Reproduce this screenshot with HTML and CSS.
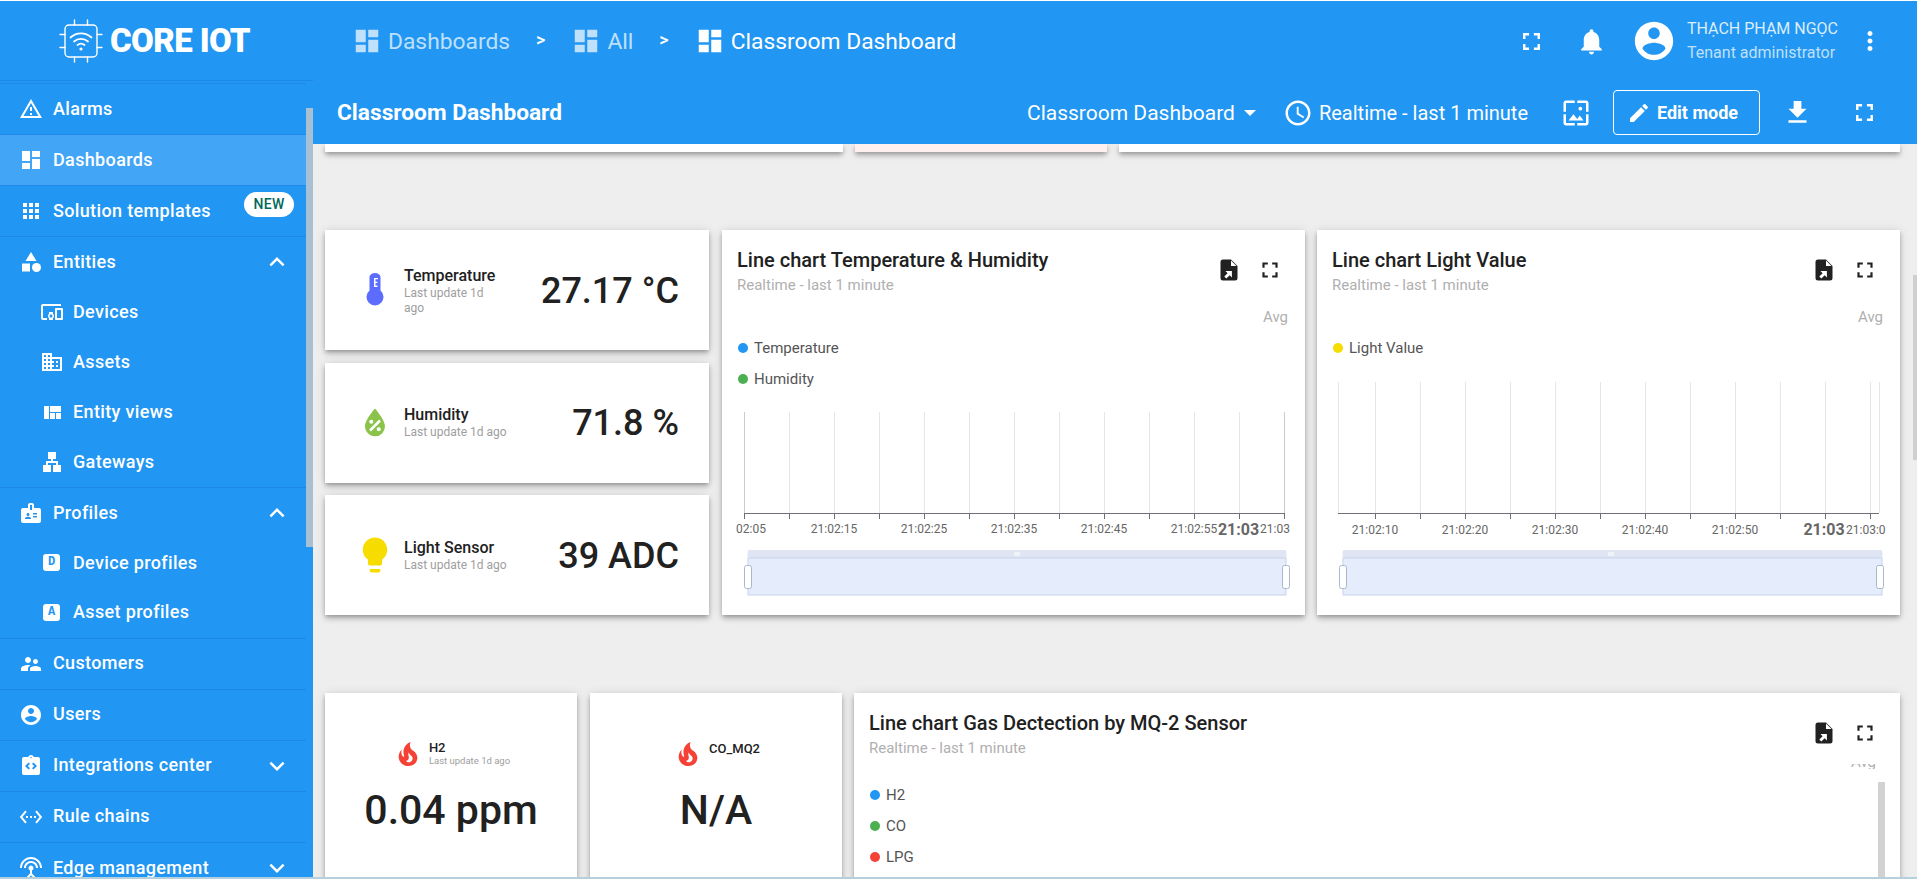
FILE: index.html
```html
<!DOCTYPE html>
<html>
<head>
<title>Classroom Dashboard</title>
<meta http-equiv="Content-Type" content="text/html;charset=utf-8" />
<link rel="stylesheet" href="styles.css">
</head>
<body>

<svg class="sprite" xmlns="http://www.w3.org/2000/svg">
  <symbol id="i-alarm" viewBox="0 0 24 24"><path d="M12 5.99L19.53 19H4.47L12 5.99M12 2L1 21h22L12 2zm1 14h-2v2h2v-2zm0-6h-2v4h2v-4z"/></symbol>
  <symbol id="i-dash" viewBox="0 0 24 24"><path d="M3 13h8V3H3v10zm0 8h8v-6H3v6zm10 0h8V11h-8v10zm0-18v6h8V3h-8z"/></symbol>
  <symbol id="i-apps" viewBox="0 0 24 24"><path d="M4 8h4V4H4v4zm6 12h4v-4h-4v4zm-6 0h4v-4H4v4zm0-6h4v-4H4v4zm6 0h4v-4h-4v4zm6-10v4h4V4h-4zm-6 4h4V4h-4v4zm6 6h4v-4h-4v4zm0 6h4v-4h-4v4z"/></symbol>
  <symbol id="i-category" viewBox="0 0 24 24"><path d="M12 2l-5.5 9h11z"/><circle cx="17.5" cy="17.5" r="4.5"/><path d="M3 13.5h8v8H3z"/></symbol>
  <symbol id="i-devices" viewBox="0 0 24 24"><path d="M3 6h18V4H3c-1.1 0-2 .9-2 2v12c0 1.1.9 2 2 2h4v-2H3V6zm10 6H9v1.78c-.61.55-1 1.33-1 2.22s.39 1.67 1 2.22V20h4v-1.78c.61-.55 1-1.34 1-2.22s-.39-1.67-1-2.22V12zm-2 5.5c-.83 0-1.5-.67-1.5-1.5s.67-1.5 1.5-1.5 1.5.67 1.5 1.5-.67 1.5-1.5 1.5zM22 8h-6c-.5 0-1 .5-1 1v10c0 .5.5 1 1 1h6c.5 0 1-.5 1-1V9c0-.5-.5-1-1-1zm-1 10h-4v-8h4v8z"/></symbol>
  <symbol id="i-domain" viewBox="0 0 24 24"><path d="M12 7V3H2v18h20V7H12zM6 19H4v-2h2v2zm0-4H4v-2h2v2zm0-4H4V9h2v2zm0-4H4V5h2v2zm4 12H8v-2h2v2zm0-4H8v-2h2v2zm0-4H8V9h2v2zm0-4H8V5h2v2zm10 12h-8v-2h2v-2h-2v-2h2v-2h-2V9h8v10zm-2-8h-2v2h2v-2zm0 4h-2v2h2v-2z"/></symbol>
  <symbol id="i-quilt" viewBox="0 0 24 24"><path d="M10 18h5v-6h-5v6zm-6 0h5V5H4v13zm12 0h5v-6h-5v6zM10 5v6h11V5H10z"/></symbol>
  <symbol id="i-lan" viewBox="0 0 24 24"><path d="M13 22h8v-7h-3v-4h-5V9h3V2H8v7h3v2H6v4H3v7h8v-7H8v-2h8v2h-3z"/></symbol>
  <symbol id="i-badge" viewBox="0 0 24 24"><path d="M20 7h-5V4c0-1.1-.9-2-2-2h-2c-1.1 0-2 .9-2 2v3H4c-1.1 0-2 .9-2 2v11c0 1.1.9 2 2 2h16c1.1 0 2-.9 2-2V9c0-1.1-.9-2-2-2zM9 12c.83 0 1.5.67 1.5 1.5S9.83 15 9 15s-1.5-.67-1.5-1.5S8.17 12 9 12zm3 6H6v-.75c0-1 2-1.5 3-1.5s3 .5 3 1.5V18zm1-9h-2V4h2v5zm5 7.5h-4V15h4v1.5zm0-3h-4V12h4v1.5z"/></symbol>
  <symbol id="i-people" viewBox="0 0 24 24"><path d="M16.5 12c1.38 0 2.49-1.12 2.49-2.5S17.88 7 16.5 7C15.12 7 14 8.12 14 9.5s1.12 2.5 2.5 2.5zM9 11c1.66 0 2.99-1.34 2.99-3S10.66 5 9 5C7.34 5 6 6.34 6 8s1.34 3 3 3zm7.5 3c-1.83 0-5.5.92-5.5 2.75V19h11v-2.25c0-1.83-3.67-2.75-5.5-2.75zM9 13c-2.33 0-7 1.17-7 3.5V19h7v-2.25c0-.85.33-2.34 2.37-3.47C10.5 13.1 9.66 13 9 13z"/></symbol>
  <symbol id="i-account" viewBox="0 0 24 24"><path d="M12 2C6.48 2 2 6.48 2 12s4.48 10 10 10 10-4.48 10-10S17.52 2 12 2zm0 3c1.66 0 3 1.34 3 3s-1.34 3-3 3-3-1.34-3-3 1.34-3 3-3zm0 14.2c-2.5 0-4.71-1.28-6-3.22.03-1.99 4-3.08 6-3.08 1.99 0 5.97 1.09 6 3.08-1.29 1.94-3.5 3.22-6 3.22z"/></symbol>
  <symbol id="i-integration" viewBox="0 0 24 24"><path d="M19 3h-4.18C14.4 1.84 13.3 1 12 1c-1.3 0-2.4.84-2.82 2H5c-.14 0-.27.01-.4.04-.39.08-.74.28-1.01.55-.18.18-.33.4-.43.64-.1.23-.16.49-.16.77v14c0 .27.06.54.16.78s.25.45.43.64c.27.27.62.47 1.01.55.13.02.26.03.4.03h14c1.1 0 2-.9 2-2V5c0-1.1-.9-2-2-2zm-8 11.17l-1.41 1.42L6 12l3.59-3.59L11 9.83 8.83 12 11 14.17zm1-9.92c-.41 0-.75-.34-.75-.75s.34-.75.75-.75.75.34.75.75-.34.75-.75.75zm2.41 11.34L13 14.17 15.17 12 13 9.83l1.41-1.42L18 12l-3.59 3.59z"/></symbol>
  <symbol id="i-rules" viewBox="0 0 24 24"><path d="M7.77 6.76L6.23 5.48.82 12l5.41 6.52 1.54-1.28L3.42 12l4.35-5.24zM7 13h2v-2H7v2zm10-2h-2v2h2v-2zm-6 2h2v-2h-2v2zm6.77-7.52l-1.54 1.28L20.58 12l-4.35 5.24 1.54 1.28L23.18 12l-5.41-6.52z"/></symbol>
  <symbol id="i-antenna" viewBox="0 0 24 24"><path d="M12 5c-3.87 0-7 3.13-7 7h2c0-2.76 2.24-5 5-5s5 2.24 5 5h2c0-3.87-3.13-7-7-7zm1 9.29c.88-.39 1.5-1.26 1.5-2.29 0-1.38-1.12-2.5-2.5-2.5S9.5 10.62 9.5 12c0 1.02.62 1.9 1.5 2.29v3.3L7.59 21 9 22.41l3-3 3 3L16.41 21 13 17.59v-3.3zM12 1C5.93 1 1 5.93 1 12h2c0-4.97 4.03-9 9-9s9 4.03 9 9h2c0-6.07-4.93-11-11-11z"/></symbol>
  <symbol id="i-less" viewBox="0 0 24 24"><path d="M12 8l-6 6 1.41 1.41L12 10.83l4.59 4.58L18 14z"/></symbol>
  <symbol id="i-more" viewBox="0 0 24 24"><path d="M16.59 8.59L12 13.17 7.41 8.59 6 10l6 6 6-6z"/></symbol>
  <symbol id="i-full" viewBox="0 0 24 24"><path d="M7 14H5v5h5v-2H7v-3zm-2-4h2V7h3V5H5v5zm12 7h-3v2h5v-5h-2v3zM14 5v2h3v3h2V5h-5z"/></symbol>
  <symbol id="i-bell" viewBox="0 0 24 24"><path d="M12 22c1.1 0 2-.9 2-2h-4c0 1.1.89 2 2 2zm6-6v-5c0-3.07-1.64-5.64-4.5-6.32V4c0-.83-.67-1.5-1.5-1.5s-1.5.67-1.5 1.5v.68C7.63 5.36 6 7.92 6 11v5l-2 2v1h16v-1l-2-2z"/></symbol>
  <symbol id="i-vert" viewBox="0 0 24 24"><path d="M12 8c1.1 0 2-.9 2-2s-.9-2-2-2-2 .9-2 2 .9 2 2 2zm0 2c-1.1 0-2 .9-2 2s.9 2 2 2 2-.9 2-2-.9-2-2-2zm0 6c-1.1 0-2 .9-2 2s.9 2 2 2 2-.9 2-2-.9-2-2-2z"/></symbol>
  <symbol id="i-clock" viewBox="0 0 24 24"><path d="M11.99 2C6.47 2 2 6.48 2 12s4.47 10 9.99 10C17.52 22 22 17.52 22 12S17.52 2 11.99 2zM12 20c-4.42 0-8-3.58-8-8s3.58-8 8-8 8 3.58 8 8-3.58 8-8 8zm.5-13H11v6l5.25 3.15.75-1.23-4.5-2.67z"/></symbol>
  <symbol id="i-wall" viewBox="0 0 24 24"><path d="M4 4h7V2H4c-1.1 0-2 .9-2 2v7h2V4zm6 9l-4 5h12l-3-4-2.03 2.71L10 13zm7-4.5c0-.83-.67-1.5-1.5-1.5S14 7.67 14 8.5s.67 1.5 1.5 1.5S17 9.33 17 8.5zM20 2h-7v2h7v7h2V4c0-1.1-.9-2-2-2zm0 18h-7v2h7c1.1 0 2-.9 2-2v-7h-2v7zM4 13H2v7c0 1.1.9 2 2 2h7v-2H4v-7z"/></symbol>
  <symbol id="i-edit" viewBox="0 0 24 24"><path d="M3 17.25V21h3.75L17.81 9.94l-3.75-3.75L3 17.25zM20.71 7.04c.39-.39.39-1.02 0-1.41l-2.34-2.34c-.39-.39-1.02-.39-1.41 0l-1.83 1.83 3.75 3.75 1.83-1.83z"/></symbol>
  <symbol id="i-down" viewBox="0 0 24 24"><path d="M19 9h-4V3H9v6H5l7 7 7-7zM5 18v2h14v-2H5z"/></symbol>
  <symbol id="i-export" viewBox="0 0 24 24"><path fill="#212121" d="M6 1.5a2.5 2.5 0 0 0-2.5 2.5v16A2.5 2.5 0 0 0 6 22.500h12a2.500 2.500 0 0 0 2.500-2.500V8l-6.500-6.500z"/><path fill="#fff" d="M14 2.500v5.500h5.500zM9.300 20.500l-2-2 3.300-3.300-2.100-2.100h6.400v6.400l-2.200-2.200z"/></symbol>
  <symbol id="i-water" viewBox="0 0 24 24"><path d="M12,3.25C12,3.25 6,10 6,14C6,17.32 8.69,20 12,20A6,6 0 0,0 18,14C18,10 12,3.25 12,3.25M14.47,9.97L15.53,11.03L9.53,17.03L8.47,15.97M9.75,10A1.25,1.25 0 0,1 11,11.25A1.25,1.25 0 0,1 9.75,12.5A1.25,1.25 0 0,1 8.5,11.25A1.25,1.25 0 0,1 9.75,10M14.25,14.5A1.25,1.25 0 0,1 15.5,15.75A1.25,1.25 0 0,1 14.25,17A1.25,1.25 0 0,1 13,15.75A1.25,1.25 0 0,1 14.25,14.5Z"/></symbol>
  <symbol id="i-bulb" viewBox="0 0 24 24"><path d="M9 21c0 .55.45 1 1 1h4c.55 0 1-.45 1-1v-1H9v1zm3-19C8.140 2 5 5.140 5 9c0 2.380 1.190 4.470 3 5.740V17c0 .55.45 1 1 1h6c.55 0 1-.45 1-1v-2.260c1.810-1.270 3-3.360 3-5.740 0-3.860-3.140-7-7-7z"/></symbol>
  <symbol id="i-fire" viewBox="0 0 24 24"><path d="M17.66 11.2C17.43 10.9 17.15 10.64 16.89 10.38C16.22 9.78 15.46 9.35 14.82 8.72C13.33 7.26 13 4.85 13.95 3C13 3.23 12.17 3.75 11.46 4.32C8.87 6.4 7.85 10.07 9.07 13.22C9.11 13.32 9.15 13.42 9.15 13.55C9.15 13.77 9 13.97 8.8 14.05C8.57 14.15 8.33 14.09 8.14 13.93C8.08 13.88 8.04 13.83 8 13.76C6.87 12.33 6.69 10.28 7.45 8.64C5.78 10 4.87 12.3 5 14.47C5.06 14.97 5.12 15.47 5.29 15.97C5.43 16.57 5.7 17.17 6 17.7C7.08 19.43 8.95 20.67 10.96 20.92C13.1 21.19 15.39 20.8 17.03 19.32C18.86 17.66 19.5 15 18.56 12.72L18.43 12.46C18.22 12 17.66 11.2 17.66 11.2M14.5 17.5C14.22 17.74 13.76 18 13.4 18.1C12.28 18.5 11.16 17.94 10.5 17.28C11.69 17 12.4 16.12 12.61 15.23C12.78 14.43 12.46 13.77 12.33 13C12.21 12.26 12.23 11.63 12.5 10.94C12.69 11.32 12.89 11.7 13.13 12C13.9 13 15.11 13.44 15.37 14.8C15.41 14.94 15.43 15.08 15.43 15.23C15.46 16.05 15.1 16.95 14.5 17.5H14.5Z"/></symbol>
</svg>

<div class="app">
  <aside class="sidebar">
    <div class="logo">
      <svg class="logo-chip" viewBox="0 0 44 44" stroke="#fff" stroke-width="1.400" stroke-linecap="round">
        <rect x="6" y="6" width="32" height="32" rx="4"/>
        <path d="M15.500 1v5M28.500 1v5M15.500 38v5M28.500 38v5M1 15.500h5M1 28.500h5M38 15.500h5M38 28.500h5"/>
        <path stroke-width="1.800" d="M11.500 18.500c6-5.500 15-5.500 21 0M15 22.500c4-3.500 10-3.500 14 0M18.500 26c2-1.500 5-1.500 7 0"/>
        <circle cx="22" cy="30" r="1.600" fill="#fff" stroke="none"/>
      </svg>
      <span class="logo-text">CORE IOT</span>
    </div>
    <nav class="menu">
      <a class="item line"><svg class="ico"><use href="#i-alarm"/></svg><span>Alarms</span></a>
      <a class="item line active"><svg class="ico"><use href="#i-dash"/></svg><span>Dashboards</span></a>
      <a class="item line"><svg class="ico"><use href="#i-apps"/></svg><span>Solution templates</span><b class="new">NEW</b></a>
      <a class="item open"><svg class="ico"><use href="#i-category"/></svg><span>Entities</span><svg class="chev"><use href="#i-less"/></svg></a>
      <a class="item sub"><svg class="ico"><use href="#i-devices"/></svg><span>Devices</span></a>
      <a class="item sub"><svg class="ico"><use href="#i-domain"/></svg><span>Assets</span></a>
      <a class="item sub"><svg class="ico"><use href="#i-quilt"/></svg><span>Entity views</span></a>
      <a class="item sub line"><svg class="ico"><use href="#i-lan"/></svg><span>Gateways</span></a>
      <a class="item open"><svg class="ico"><use href="#i-badge"/></svg><span>Profiles</span><svg class="chev"><use href="#i-less"/></svg></a>
      <a class="item sub"><i class="letter">D</i><span>Device profiles</span></a>
      <a class="item sub line"><i class="letter">A</i><span>Asset profiles</span></a>
      <a class="item line"><svg class="ico"><use href="#i-people"/></svg><span>Customers</span></a>
      <a class="item line"><svg class="ico"><use href="#i-account"/></svg><span>Users</span></a>
      <a class="item line"><svg class="ico"><use href="#i-integration"/></svg><span>Integrations center</span><svg class="chev"><use href="#i-more"/></svg></a>
      <a class="item line"><svg class="ico"><use href="#i-rules"/></svg><span>Rule chains</span></a>
      <a class="item"><svg class="ico"><use href="#i-antenna"/></svg><span>Edge management</span><svg class="chev"><use href="#i-more"/></svg></a>
    </nav>
    <div class="side-thumb"></div>
  </aside>

  <main class="main">
    <header class="topbar">
      <div class="bar-top">
        <div class="crumb dim"><svg class="crumb-ico"><use href="#i-dash"/></svg>Dashboards</div>
        <span class="sep">&gt;</span>
        <div class="crumb dim"><svg class="crumb-ico"><use href="#i-dash"/></svg>All</div>
        <span class="sep">&gt;</span>
        <div class="crumb"><svg class="crumb-ico"><use href="#i-dash"/></svg>Classroom Dashboard</div>
        <button class="btn push"><svg><use href="#i-full"/></svg></button>
        <button class="btn bell"><svg><use href="#i-bell"/></svg></button>
        <svg class="avatar"><use href="#i-account"/></svg>
        <div class="user">
          <div class="user-name">THẠCH PHẠM NGỌC</div>
          <div class="user-role">Tenant administrator</div>
        </div>
        <button class="btn vert"><svg><use href="#i-vert"/></svg></button>
      </div>
      <div class="bar-bottom">
        <div class="dash-title">Classroom Dashboard</div>
        <div class="state push">Classroom Dashboard<i class="caret"></i></div>
        <svg class="clock"><use href="#i-clock"/></svg>
        <div class="time">Realtime - last 1 minute</div>
        <button class="btn wall"><svg><use href="#i-wall"/></svg></button>
        <button class="edit"><svg><use href="#i-edit"/></svg>Edit mode</button>
        <button class="btn down"><svg><use href="#i-down"/></svg></button>
        <button class="btn full2"><svg><use href="#i-full"/></svg></button>
      </div>
    </header>

    <div class="content">
      <div class="row row-cut">
        <div class="card w-cut1"></div>
        <div class="card w-cut2 pink"></div>
        <div class="card w-cut3"></div>
      </div>

      <div class="row row-mid">
        <div class="stack">
          <div class="card stat">
            <svg class="stat-ico thermo" viewBox="0 0 17 34"><path fill="#5b6cff" d="M3 4a5.500 4 0 0 1 11 0v13.500a8.500 8.500 0 1 1-11 0z"/><path fill="#fff" d="M7.500 5h4v1.300h-2.500v2.500h2v1.300h-2v2.500h2v1.300h-3.500z"/></svg>
            <div class="stat-text narrow"><div class="stat-name">Temperature</div><div class="stat-sub">Last update 1d ago</div></div>
            <div class="stat-val">27.17 °C</div>
          </div>
          <div class="card stat">
            <svg class="stat-ico water"><use href="#i-water"/></svg>
            <div class="stat-text"><div class="stat-name">Humidity</div><div class="stat-sub">Last update 1d ago</div></div>
            <div class="stat-val">71.8 %</div>
          </div>
          <div class="card stat">
            <svg class="stat-ico bulb"><use href="#i-bulb"/></svg>
            <div class="stat-text"><div class="stat-name">Light Sensor</div><div class="stat-sub">Last update 1d ago</div></div>
            <div class="stat-val">39 ADC</div>
          </div>
        </div>

        <div class="card chart">
          <div class="chart-head">
            <div><div class="chart-title">Line chart Temperature &amp; Humidity</div><div class="chart-sub">Realtime - last 1 minute</div></div>
            <svg class="act"><use href="#i-export"/></svg><svg class="act act-full"><use href="#i-full"/></svg>
          </div>
          <div class="avg">Avg</div>
          <div class="leg"><i class="dot blue"></i>Temperature</div>
          <div class="leg"><i class="dot green"></i>Humidity</div>
          <svg class="plot" width="583" height="220" viewBox="0 15 583 220">
            <path class="grid" d="M67.500 32V133M112.500 32V133M157.500 32V133M202.500 32V133M247.500 32V133M292.500 32V133M337.500 32V133M382.500 32V133M427.500 32V133M472.500 32V133M517.500 32V133"/>
            <path class="grid edge" d="M22.500 32V133M562.500 32V133"/>
            <path class="axis" d="M22 133.500H563M22.500 133V139M67.500 133V139M112.500 133V139M157.500 133V139M202.500 133V139M247.500 133V139M292.500 133V139M337.500 133V139M382.500 133V139M427.500 133V139M472.500 133V139M517.500 133V139M562.500 133V139"/>
            <text x="14" y="153">02:05</text>
            <text x="112" y="153" class="mid">21:02:15</text><text x="202" y="153" class="mid">21:02:25</text><text x="292" y="153" class="mid">21:02:35</text><text x="382" y="153" class="mid">21:02:45</text><text x="472" y="153" class="mid">21:02:55</text>
            <text x="516.500" y="155" class="mid bold">21:03</text>
            <text x="538" y="153">21:03</text>
            <rect class="s-top" x="25.500" y="170" width="539" height="8" rx="2"/>
            <rect class="s-body" x="26" y="178" width="538" height="37"/>
            <path class="s-grip" d="M293 172v4M295 172v4M297 172v4"/>
            <rect class="s-handle" x="22.500" y="185.500" width="7" height="23" rx="2"/>
            <rect class="s-handle" x="560.500" y="185.500" width="7" height="23" rx="2"/>
          </svg>
        </div>

        <div class="card chart">
          <div class="chart-head">
            <div><div class="chart-title">Line chart Light Value</div><div class="chart-sub">Realtime - last 1 minute</div></div>
            <svg class="act"><use href="#i-export"/></svg><svg class="act act-full"><use href="#i-full"/></svg>
          </div>
          <div class="avg">Avg</div>
          <div class="leg"><i class="dot yellow"></i>Light Value</div>
          <svg class="plot" width="583" height="235" viewBox="0 0 583 235">
            <path class="grid" d="M21.500 2V133M58.500 2V133M103.500 2V133M148.500 2V133M193.500 2V133M238.500 2V133M283.500 2V133M328.500 2V133M373.500 2V133M418.500 2V133M463.500 2V133M508.500 2V133M553.500 2V133M562.500 2V133"/>
            <path class="axis" d="M21 133.500H562M58.500 133V139M103.500 133V139M148.500 133V139M193.500 133V139M238.500 133V139M283.500 133V139M328.500 133V139M373.500 133V139M418.500 133V139M463.500 133V139M508.500 133V139M553.500 133V139"/>
            <text x="58" y="154" class="mid">21:02:10</text><text x="148" y="154" class="mid">21:02:20</text><text x="238" y="154" class="mid">21:02:30</text><text x="328" y="154" class="mid">21:02:40</text><text x="418" y="154" class="mid">21:02:50</text>
            <text x="507" y="155" class="mid bold">21:03</text>
            <text x="529" y="154">21:03:0</text>
            <rect class="s-top" x="25.500" y="170" width="540" height="8" rx="2"/>
            <rect class="s-body" x="26" y="178" width="539" height="37"/>
            <path class="s-grip" d="M292 172v4M294 172v4M296 172v4"/>
            <rect class="s-handle" x="22.500" y="185.500" width="7" height="23" rx="2"/>
            <rect class="s-handle" x="559.500" y="185.500" width="7" height="23" rx="2"/>
          </svg>
        </div>
      </div>

      <div class="row row-low">
        <div class="card gas w-gas">
          <div class="gas-head">
            <svg class="fire"><use href="#i-fire"/></svg>
            <div><div class="gas-name">H2</div><div class="gas-sub">Last update 1d ago</div></div>
          </div>
          <div class="gas-val">0.04 ppm</div>
        </div>
        <div class="card gas w-gas">
          <div class="gas-head">
            <svg class="fire"><use href="#i-fire"/></svg>
            <div class="gas-only"><div class="gas-name">CO_MQ2</div></div>
          </div>
          <div class="gas-val">N/A</div>
        </div>
        <div class="card chart wide">
          <div class="chart-head">
            <div><div class="chart-title">Line chart Gas Dectection by MQ-2 Sensor</div><div class="chart-sub">Realtime - last 1 minute</div></div>
            <svg class="act"><use href="#i-export"/></svg><svg class="act act-full"><use href="#i-full"/></svg>
          </div>
          <div class="avg-clip"><span>Avg</span></div>
          <div class="leg"><i class="dot blue"></i>H2</div>
          <div class="leg"><i class="dot green"></i>CO</div>
          <div class="leg"><i class="dot red"></i>LPG</div>
          <div class="leg-thumb"></div>
        </div>
      </div>
    </div>
    <div class="page-thumb"></div>
  </main>
</div>
<div class="edge-line"></div>
</body>
</html>
```

FILE: styles.css
```css
html, body {
    margin: 0;
    padding: 0;
    height: 879px;
    overflow: hidden;
    background: #fff;
    font-family: Roboto, "Liberation Sans", sans-serif;
}
.sprite {
    display: none;
}
svg {
    fill: currentColor;
}
.app {
    display: flex;
    margin-top: 1px;
    height: 876px;
    overflow: hidden;
}
.edge-line {
    height: 2px;
    background: #b4d0de;
}

/* sidebar */
.sidebar {
    position: relative;
    flex: none;
    width: 313px;
    background: #2196f3;
    color: #fff;
    overflow: hidden;
}
.logo {
    display: flex;
    align-items: center;
    height: 80px;
    padding-left: 59px;
    border-bottom: 1px solid #1e88e5;
    box-sizing: border-box;
}
.logo-chip {
    width: 44px;
    height: 44px;
    margin-right: 7px;
    fill: none;
}
.logo-text {
    font-size: 33px;
    font-weight: 900;
    letter-spacing: -0.6px;
}
.menu {
    width: 306px;
    margin-top: 2px;
    border-top: 1px solid #1e88e5;
}
.item {
    display: flex;
    align-items: center;
    height: 51px;
    box-sizing: border-box;
    padding-left: 53px;
    padding-bottom: 2px;
    font-size: 18px;
    font-weight: 500;
    letter-spacing: 0.35px;
    position: relative;
}
.item.sub {
    height: 50.200px;
    padding-left: 73px;
}
.item.open {
    height: 50.200px;
}
.line {
    border-bottom: 1px solid #1e88e5;
}
.active {
    background: #42a5f5;
}
.ico {
    position: absolute;
    left: 19px;
    top: 50%;
    width: 24px;
    height: 24px;
    margin-top: -12px;
}
.sub .ico {
    left: 40px;
}
.letter {
    position: absolute;
    left: 43px;
    top: 50%;
    width: 17px;
    height: 17px;
    margin-top: -9px;
    background: #fff;
    border-radius: 3px;
    color: #2196f3;
    font: 700 12px/17px "Liberation Mono", monospace;
    letter-spacing: 0;
    text-align: center;
}
.new {
    position: absolute;
    left: 244px;
    top: 6px;
    width: 50px;
    height: 25px;
    border-radius: 13px;
    background: #fff;
    color: #00695c;
    font-size: 14px;
    font-weight: 500;
    line-height: 25px;
    text-align: center;
}
.chev {
    position: absolute;
    left: 262px;
    top: 50%;
    width: 30px;
    height: 30px;
    margin-top: -15px;
}
.side-thumb {
    position: absolute;
    top: 107px;
    left: 306px;
    width: 7px;
    height: 439px;
    background: #a9bfd4;
}

/* top bar */
.main {
    position: relative;
    flex: 1;
    min-width: 0;
    display: flex;
    flex-direction: column;
    background: #eee;
}
.topbar {
    flex: none;
    background: #2196f3;
    color: #fff;
    position: relative;
    z-index: 2;
}
.bar-top {
    display: flex;
    align-items: center;
    height: 80px;
    padding-left: 43px;
    padding-right: 27px;
}
.bar-bottom {
    display: flex;
    align-items: center;
    height: 63px;
    padding-left: 24px;
    padding-right: 33px;
}
.crumb {
    display: flex;
    align-items: center;
    font-size: 22.800px;
}
.dim {
    color: #bfe0fb;
}
.crumb-ico {
    width: 30px;
    height: 30px;
    margin-left: -4px;
    margin-right: 6px;
}
.sep {
    font-size: 18px;
    font-weight: 500;
    margin: -4px 30px 0 26px;
}
button {
    border: 0;
    padding: 0;
    background: none;
    color: #fff;
    font-family: inherit;
}
.btn {
    flex: none;
    display: flex;
    align-items: center;
    justify-content: center;
    width: 40px;
    height: 40px;
}
.btn svg {
    flex: none;
    width: 29px;
    height: 29px;
}
.push {
    margin-left: auto;
}
.bell {
    margin-left: 20px;
}
.bell svg {
    width: 31px;
    height: 31px;
}
.avatar {
    flex: none;
    width: 46px;
    height: 46px;
    margin-left: 20px;
}
.user {
    width: 153px;
    margin-left: 10px;
    font-size: 16px;
    line-height: 24px;
    white-space: nowrap;
}
.user-name {
    color: #dcedfc;
}
.user-role {
    color: #bfe0fb;
}
.vert {
    margin-left: 10px;
}
.vert svg {
    width: 30px;
    height: 30px;
}
.dash-title {
    font-size: 22.700px;
    font-weight: 700;
}
.state {
    font-size: 21px;
    display: flex;
    align-items: center;
}
.caret {
    width: 0;
    height: 0;
    margin-left: 9px;
    border-left: 6px solid transparent;
    border-right: 6px solid transparent;
    border-top: 6px solid #fff;
}
.clock {
    flex: none;
    width: 30px;
    height: 30px;
    margin-left: 27px;
    margin-right: 6px;
}
.time {
    font-size: 20px;
    white-space: nowrap;
}
.wall {
    margin-left: 28px;
}
.wall svg {
    width: 30px;
    height: 30px;
}
.edit {
    display: flex;
    align-items: center;
    width: 147px;
    height: 45px;
    margin-left: 17px;
    padding-left: 13px;
    box-sizing: border-box;
    border: 1px solid #fff;
    border-radius: 4px;
    font-size: 18px;
    font-weight: 700;
    white-space: nowrap;
}
.edit svg {
    flex: none;
    width: 24px;
    height: 24px;
    margin-right: 6px;
}
.down {
    margin-left: 17px;
}
.down svg {
    width: 31px;
    height: 31px;
}
.full2 {
    margin-left: 27px;
}

/* dashboard */
.content {
    flex: 1;
    min-height: 0;
    padding: 0 17px 0 12px;
    overflow: hidden;
}
.row {
    display: flex;
    column-gap: 12px;
}
.card {
    background: #fff;
    box-shadow: 0 2px 4px -1px rgba(0,0,0,.25), 0 4px 5px rgba(0,0,0,.14), 0 1px 10px rgba(0,0,0,.12);
}
.row-cut {
    height: 8px;
}
.w-cut1 {
    width: 518px;
}
.w-cut2 {
    width: 252px;
}
.pink {
    background: #fff0f0;
}
.w-cut3 {
    flex: 1;
}
.row-mid {
    height: 385px;
    margin-top: 78px;
}
.row-low {
    height: 300px;
    margin-top: 78px;
}
.stack {
    flex: none;
    width: 384px;
    margin-right: 1px;
    display: flex;
    flex-direction: column;
    justify-content: space-between;
}
.stat {
    display: flex;
    align-items: center;
    height: 120px;
    padding-right: 30px;
}
.stat-ico {
    flex: none;
    width: 58px;
    height: 34px;
    margin-left: 21px;
}
.water {
    height: 40px;
    color: #8bc34a;
}
.bulb {
    height: 42px;
    color: #f7dc00;
}
.stat-text {
    width: 110px;
    white-space: nowrap;
}
.stat-text.narrow {
    white-space: normal;
    width: 90px;
    padding-top: 1px;
}
.stat-name {
    font-size: 16px;
    font-weight: 500;
    line-height: 20px;
    color: #212121;
}
.stat-sub {
    font-size: 12px;
    line-height: 15px;
    color: #9e9e9e;
}
.stat-val {
    margin-left: auto;
    padding-top: 1px;
    font-size: 36px;
    font-weight: 500;
    color: #212121;
    white-space: nowrap;
}
.chart {
    position: relative;
    flex: 1;
    display: flex;
    flex-direction: column;
    min-width: 0;
    overflow: hidden;
}
.chart-head {
    display: flex;
    flex: none;
    padding: 19px 0 0 15px;
    height: 46px;
}
.chart-head > div {
    flex: 1;
}
.chart-title {
    font-size: 20px;
    font-weight: 500;
    line-height: 22px;
    color: #212121;
}
.chart-sub {
    margin-top: 4px;
    font-size: 15px;
    line-height: 20px;
    color: #b0b0b0;
}
.act {
    flex: none;
    width: 24px;
    height: 24px;
    margin: 9px 16px 0 0;
    color: #212121;
}
.act-full {
    width: 26px;
    height: 26px;
    margin: 8px 22px 0 0;
}
.avg {
    flex: none;
    margin-top: 12px;
    padding-right: 17px;
    height: 20px;
    font-size: 15px;
    line-height: 20px;
    color: #b0b0b0;
    text-align: right;
}
.leg {
    flex: none;
    display: flex;
    align-items: center;
    height: 31px;
    padding-left: 16px;
    font-size: 15px;
    color: #555;
}
.avg + .leg {
    margin-top: 5px;
}
.dot {
    width: 10px;
    height: 10px;
    margin-right: 6px;
    border-radius: 50%;
}
.blue { background: #2196f3; }
.green { background: #4caf50; }
.yellow { background: #f7dc00; }
.red { background: #f44336; }
.plot {
    display: block;
    flex: none;
    margin-top: auto;
    font-size: 12px;
}
.plot text {
    fill: #666;
}
.plot .mid {
    text-anchor: middle;
}
.plot .bold {
    font-size: 16px;
    font-weight: 700;
}
.grid {
    stroke: #e6e6e6;
    fill: none;
}
.edge {
    stroke: #ccc;
}
.axis {
    stroke: #6e7079;
    fill: none;
}
.s-top {
    fill: #dfe5f3;
}
.s-body {
    fill: #e5ecfc;
    stroke: #c8d3ea;
}
.s-grip {
    stroke: #fff;
    fill: none;
}
.s-handle {
    fill: #fff;
    stroke: #a7b7cc;
}
.w-gas {
    flex: none;
    width: 252px;
}
.w-gas:first-child {
    margin-right: 1px;
}
.gas {
    display: flex;
    flex-direction: column;
    align-items: center;
}
.gas-head {
    display: flex;
    align-items: center;
    margin-top: 45px;
    height: 32px;
}
.fire {
    width: 32px;
    height: 32px;
    color: #f44336;
    margin-right: 5px;
}
.gas-name {
    font-size: 13px;
    font-weight: 500;
    line-height: 14px;
    color: #212121;
}
.gas-sub {
    font-size: 9.500px;
    line-height: 12px;
    color: #9e9e9e;
}
.gas-only {
    margin-top: -11px;
}
.gas-val {
    margin-top: 16px;
    font-size: 41px;
    font-weight: 500;
    color: #212121;
    white-space: nowrap;
}
.avg-clip {
    flex: none;
    height: 5px;
    margin-top: 6px;
    padding-right: 24px;
    overflow: hidden;
    text-align: right;
    font-size: 15px;
    line-height: 14px;
    color: #b0b0b0;
}
.avg-clip span {
    display: block;
    margin-top: -9px;
}
.avg-clip + .leg {
    margin-top: 10px;
}
.leg-thumb {
    position: absolute;
    left: 1024px;
    top: 89px;
    bottom: 0;
    width: 7px;
    background: #d2d2d2;
}
.page-thumb {
    position: absolute;
    z-index: 1;
    top: 274px;
    right: 0;
    width: 4px;
    height: 185px;
    background: #cfcfcf;
}
```
